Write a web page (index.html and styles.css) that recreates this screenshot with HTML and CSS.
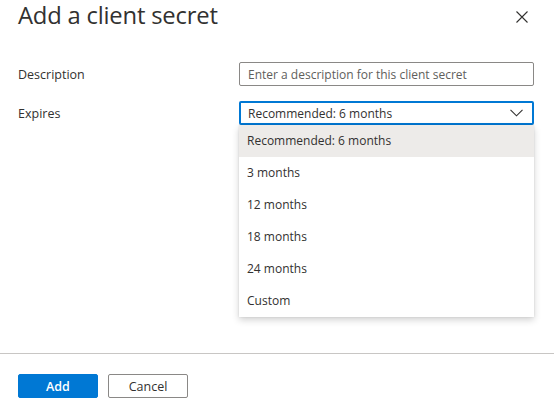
FILE: index.html
```html
<!DOCTYPE html>
<html lang="en">
<head>
    <meta charset="UTF-8">
    <meta name="viewport" content="width=device-width, initial-scale=1.0">
    <title>Add a client secret</title>
    <link rel="stylesheet" href="styles.css">
</head>
<body>
    <div class="panel">
        <div class="panel-header">
            <h2>Add a client secret</h2>
            <button class="close-btn" aria-label="Close">
                <svg width="12" height="12" viewBox="0 0 12 12">
                    <path d="M0.5 0.5 L11.5 11.5 M11.5 0.5 L0.5 11.5" stroke="#323130" stroke-width="1.1" fill="none"/>
                </svg>
            </button>
        </div>
        <div class="panel-body">
            <div class="form-row">
                <label for="desc">Description</label>
                <input id="desc" class="text-input" type="text" placeholder="Enter a description for this client secret">
            </div>
            <div class="form-row">
                <label>Expires</label>
                <div class="dropdown">
                    <div class="dropdown-box">
                        <span>Recommended: 6 months</span>
                        <svg width="13" height="8" viewBox="0 0 13 8">
                            <path d="M0.5 0.8 L6.5 6.8 L12.5 0.8" stroke="#323130" stroke-width="1.1" fill="none"/>
                        </svg>
                    </div>
                    <ul class="dropdown-menu">
                        <li class="selected">Recommended: 6 months</li>
                        <li>3 months</li>
                        <li>12 months</li>
                        <li>18 months</li>
                        <li>24 months</li>
                        <li>Custom</li>
                    </ul>
                </div>
            </div>
        </div>
        <div class="panel-footer">
            <button class="btn btn-primary">Add</button>
            <button class="btn btn-default">Cancel</button>
        </div>
    </div>
</body>
</html>
```

FILE: styles.css
```css
body {
    margin: 0;
    font-family: 'Open Sans', 'Noto Sans', sans-serif;
    color: #323130;
    background: white;
}

.panel {
    display: flex;
    flex-direction: column;
    height: 415px;
}

.panel-header {
    display: flex;
    justify-content: space-between;
    align-items: center;
    padding: 0 26px 0 18px;
    height: 33px;
}

.panel-header h2 {
    margin: -3px 0 0;
    font-size: 23.8px;
    line-height: 30px;
    font-weight: 400;
    letter-spacing: -0.2px;
    color: #323130;
}

.close-btn {
    border: none;
    background: none;
    padding: 0;
    width: 12px;
    height: 12px;
    display: flex;
}

.panel-body {
    flex: 1;
    padding: 29px 20px 0 18px;
}

.form-row {
    display: flex;
    align-items: center;
    justify-content: space-between;
    margin-bottom: 15px;
    font-size: 12.5px;
}

.form-row label {
    color: #323130;
}

.text-input {
    width: 295px;
    height: 24px;
    box-sizing: border-box;
    border: 1px solid #8a8886;
    border-radius: 2px;
    padding: 0 8px;
    font-family: inherit;
    font-size: 12px;
    outline: none;
}

.text-input::placeholder {
    color: #605e5c;
}

.dropdown {
    position: relative;
    width: 295px;
}

.dropdown-box {
    display: flex;
    justify-content: space-between;
    align-items: center;
    height: 24px;
    box-sizing: border-box;
    border: 2px solid #0078d4;
    border-radius: 2px;
    padding: 0 9px 0 7px;
    font-size: 12px;
}

.dropdown-menu {
    position: absolute;
    top: 24px;
    left: 0;
    right: 0;
    margin: 0;
    padding: 0;
    list-style: none;
    background: white;
    box-shadow: 0 3px 7px rgba(0, 0, 0, 0.18), 0 0 2px rgba(0, 0, 0, 0.1);
}

.dropdown-menu li {
    height: 32px;
    line-height: 32px;
    padding: 0 8px;
    font-size: 12px;
}

.dropdown-menu li.selected {
    background: #edebe9;
}

.panel-footer {
    border-top: 1px solid #c8c6c4;
    height: 62px;
    padding: 20px 18px 0;
    box-sizing: border-box;
    display: flex;
    gap: 10px;
}

.btn {
    width: 80px;
    height: 24px;
    border-radius: 2px;
    font-family: inherit;
    font-size: 12.5px;
    cursor: pointer;
}

.btn-primary {
    background: #0078d4;
    border: 1px solid #0078d4;
    color: white;
    font-weight: 600;
}

.btn-default {
    background: white;
    border: 1px solid #8a8886;
    color: #323130;
}
```
